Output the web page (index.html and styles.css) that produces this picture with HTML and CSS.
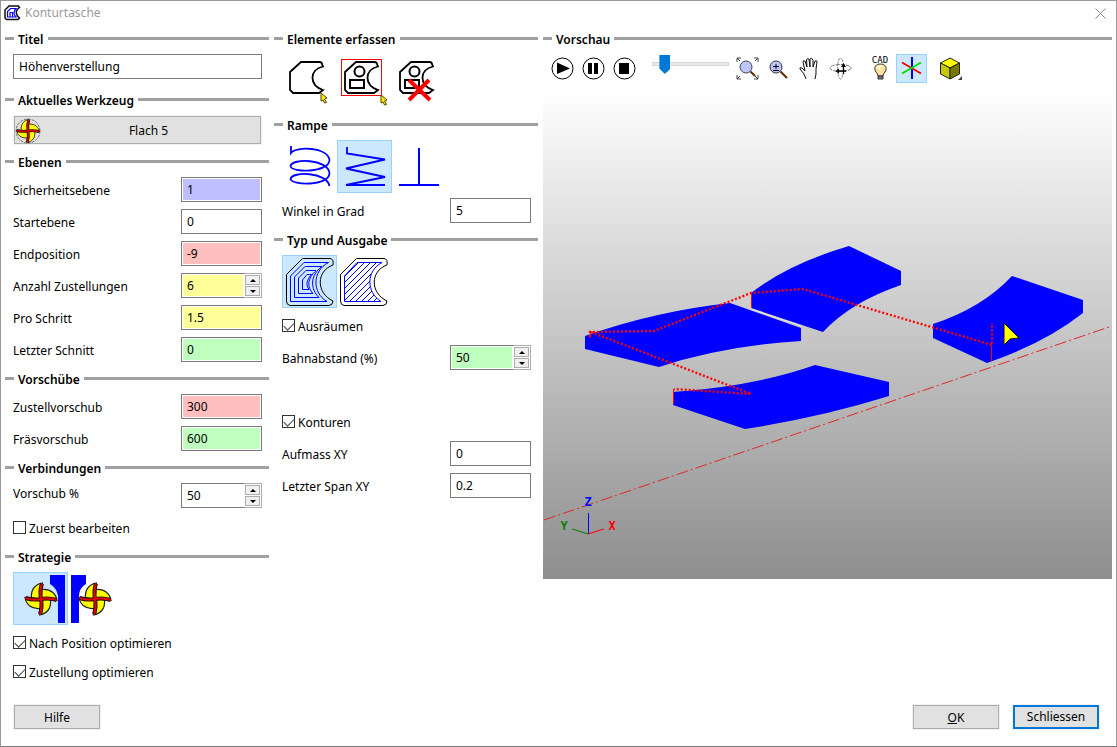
FILE: index.html
```html
<!DOCTYPE html>
<html lang="de">
<head>
<meta charset="utf-8">
<title>Konturtasche</title>
<link rel="stylesheet" href="styles.css">
</head>
<body>
<svg class="defs" aria-hidden="true">
  <defs>
    <path id="pocket" d="M19 8H37Q40 8 40 10L41 12.500C27 16 27 31 41 36L37 39H11L8 36V18Z"/>
    <path id="blade" d="M1.500 -16C-5 -15 -10.500 -10 -9.500 -1L0 0Z" fill="#ffff00" stroke="#222" stroke-width="1.200"/>
    <path id="arm" d="M1 -15.500Q-1.500 -8 0 0"/>
    <g id="arms"><use href="#arm"/><use href="#arm" transform="rotate(90)"/><use href="#arm" transform="rotate(180)"/><use href="#arm" transform="rotate(270)"/></g>
    <g id="cutter">
      <use href="#blade"/><use href="#blade" transform="rotate(90)"/><use href="#blade" transform="rotate(180)"/><use href="#blade" transform="rotate(270)"/>
      <use href="#arms" fill="none" stroke="#111" stroke-width="4"/>
      <use href="#arms" fill="none" stroke="#e00000" stroke-width="2.200"/>
    </g>
    <path id="pointer" d="M0 0L6 5L3.500 6L5.500 9.500L3.500 10L2 7L0 8Z" fill="#ffe800" stroke="#554400" stroke-width="1"/>
    <clipPath id="hatch-area"><path d="M20 7H45C29 16 29 37 44 46.500H7.500V21Z"/></clipPath>
  </defs>
</svg>

<div class="dialog">
  <header class="titlebar">
    <svg width="17" height="16" viewBox="0 0 17 16" fill="none"><path d="M5 1H14.500L15.500 2.500Q9 7 15.500 13L14 14.500H2.500L1 13V5Z" stroke="#111" stroke-width="1.500"/><path d="M6.500 3.500H12Q8 8 12 12H3.500V6.500ZM6 12V7.500H8.500V12" stroke="#0000ff" stroke-width="1.200"/></svg>
    <h1>Konturtasche</h1>
    <button class="close" aria-label="Schliessen"><svg width="11" height="11" viewBox="0 0 11 11"><path d="M.5 .5L10.500 10.500M10.500 .5L.5 10.500" stroke="#888"/></svg></button>
  </header>

  <main class="columns">
    <div class="column">
      <section class="group title-group">
        <h2><span>Titel</span></h2>
        <div class="body"><input class="field" type="text" value="Höhenverstellung" aria-label="Titel"></div>
      </section>
      <section class="group">
        <h2><span>Aktuelles Werkzeug</span></h2>
        <div class="body">
          <button class="btn tool"><svg width="26" height="26" viewBox="-18 -18 36 36"><circle r="16.500" fill="none" stroke="#444" stroke-dasharray="4 1.500"/><use href="#cutter"/></svg><span>Flach 5</span></button>
        </div>
      </section>
      <section class="group">
        <h2><span>Ebenen</span></h2>
        <div class="body">
          <div class="row"><label for="safe">Sicherheitsebene</label><input id="safe" class="field blue" value="1"></div>
          <div class="row"><label for="start">Startebene</label><input id="start" class="field" value="0"></div>
          <div class="row"><label for="end">Endposition</label><input id="end" class="field red" value="-9"></div>
          <div class="row"><label for="count">Anzahl Zustellungen</label><span class="spin"><input id="count" class="field yellow" value="6"><span class="arrows"><button aria-label="Mehr" class="up"></button><button aria-label="Weniger" class="down"></button></span></span></div>
          <div class="row"><label for="step">Pro Schritt</label><input id="step" class="field yellow" value="1.5"></div>
          <div class="row"><label for="last">Letzter Schnitt</label><input id="last" class="field green" value="0"></div>
        </div>
      </section>
      <section class="group">
        <h2><span>Vorschübe</span></h2>
        <div class="body">
          <div class="row"><label for="plunge">Zustellvorschub</label><input id="plunge" class="field red" value="300"></div>
          <div class="row"><label for="feed">Fräsvorschub</label><input id="feed" class="field green" value="600"></div>
        </div>
      </section>
      <section class="group">
        <h2><span>Verbindungen</span></h2>
        <div class="body">
          <div class="row raised"><label for="link">Vorschub %</label><span class="spin"><input id="link" class="field" value="50"><span class="arrows"><button aria-label="Mehr" class="up"></button><button aria-label="Weniger" class="down"></button></span></span></div>
          <label class="check"><input type="checkbox"><span>Zuerst bearbeiten</span></label>
        </div>
      </section>
      <section class="group">
        <h2><span>Strategie</span></h2>
        <div class="body tight">
          <div class="tiles">
            <button class="tile on" aria-label="Gleichlauf"><svg width="55" height="53" viewBox="0 0 55 53"><path d="M37 3H52V51H45V24Q44 16 37 12Z" fill="#0000ff"/><use href="#cutter" x="28" y="27"/></svg></button>
            <button class="tile" aria-label="Gegenlauf"><svg width="55" height="53" viewBox="0 0 55 53"><path d="M3 3H18V12Q11 16 11 24V51H3Z" fill="#0000ff"/><use href="#cutter" x="27" y="27"/></svg></button>
          </div>
          <label class="check"><input type="checkbox" checked><span>Nach Position optimieren</span></label>
          <label class="check"><input type="checkbox" checked><span>Zustellung optimieren</span></label>
        </div>
      </section>
    </div>

    <div class="column">
      <section class="group pick-group">
        <h2><span>Elemente erfassen</span></h2>
        <div class="body">
          <div class="tiles">
            <button class="tile" aria-label="Kontur"><svg width="55" height="53" viewBox="0 0 55 53" fill="none"><use href="#pocket" stroke="#000" stroke-width="1.800"/><use href="#pointer" x="39" y="39"/></svg></button>
            <button class="tile" aria-label="Kontur mit Inseln"><svg width="55" height="53" viewBox="0 0 55 53" fill="none"><rect x="4.500" y="5.500" width="40" height="36" stroke="#ff0000"/><use href="#pocket" stroke="#000" stroke-width="1.800"/><circle cx="22.500" cy="17.500" r="5" stroke="#000" stroke-width="2"/><path d="M13 26H27V34H13Z" stroke="#000" stroke-width="2"/><use href="#pointer" x="44" y="41"/></svg></button>
            <button class="tile" aria-label="Elemente löschen"><svg width="55" height="53" viewBox="0 0 55 53" fill="none"><use href="#pocket" stroke="#000" stroke-width="1.800"/><circle cx="22.500" cy="17.500" r="5" stroke="#000" stroke-width="2"/><path d="M13 26H27V34H13Z" stroke="#000" stroke-width="2"/><path d="M17 26L38 46M37 26L17 46" stroke="#ff0000" stroke-width="4"/></svg></button>
          </div>
        </div>
      </section>
      <section class="group">
        <h2><span>Rampe</span></h2>
        <div class="body tight">
          <div class="tiles">
            <button class="tile" aria-label="Helix"><svg width="55" height="53" viewBox="0 0 55 53" fill="none" stroke="#0000ff" stroke-width="1.800"><path d="M9 6V13C14 6 46 7 47.500 20C47 33 9 33 8.500 26C10 18 46 19 47.500 33C47 47 9 45 8.500 39C10 31 45 32 47.500 46"/></svg></button>
            <button class="tile on" aria-label="Zickzack"><svg width="55" height="53" viewBox="0 0 55 53" fill="none" stroke="#0000ff" stroke-width="1.800"><path d="M10 7V13.500L48 19.500L9 28.500L48 37L9 45H48"/></svg></button>
            <button class="tile" aria-label="Senkrecht"><svg width="55" height="53" viewBox="0 0 55 53" fill="none" stroke="#0000ff" stroke-width="2"><path d="M27 8V45M7 45H47"/></svg></button>
          </div>
          <div class="row"><label for="angle">Winkel in Grad</label><input id="angle" class="field" value="5"></div>
        </div>
      </section>
      <section class="group">
        <h2><span>Typ und Ausgabe</span></h2>
        <div class="body tight">
          <div class="tiles">
            <button class="tile on" aria-label="Konturparallel"><svg width="55" height="53" viewBox="0 0 55 53" fill="none" stroke="#0000ff"><path d="M20.500 3.500H48Q52 4 51 10C34 16 34 38 51 46Q51 50 47 50.500H8Q4.500 50 4.500 46V19.500Z" stroke="#000"/><path d="M22 7.500H46.500C30 16 30 38 45 46.500H8.500V21Z"/><path d="M23 11.500H40C28 20 28 34 37 42.500H12.500V22Z"/><path d="M24 15.500H34C25 24 25 32 31 38.500H16.500V23Z"/><path d="M25 19.500H29.500C24 26 24 30 27 34.500H20.500V25Z"/></svg></button>
            <button class="tile" aria-label="Linear"><svg width="55" height="53" viewBox="0 0 55 53" fill="none" stroke="#0000ff"><path d="M19.500 3.500H47Q51 4 50 10C33 16 33 38 50 46Q50 50 46 50.500H7Q3.500 50 3.500 46V19.500Z" stroke="#000"/><path d="M20 7.500H45C29 16 29 37 44 46.500H7.500V21Z"/><path clip-path="url(#hatch-area)" d="M-22 51L23 6M-16 51L29 6M-10 51L35 6M-4 51L41 6M2 51L47 6M8 51L53 6M14 51L59 6M20 51L65 6M26 51L71 6M32 51L77 6M38 51L83 6"/></svg></button>
          </div>
          <label class="check"><input type="checkbox" checked><span>Ausräumen</span></label>
          <div class="row spaced"><label for="dist">Bahnabstand (%)</label><span class="spin"><input id="dist" class="field green" value="50"><span class="arrows"><button aria-label="Mehr" class="up"></button><button aria-label="Weniger" class="down"></button></span></span></div>
          <label class="check separate"><input type="checkbox" checked><span>Konturen</span></label>
          <div class="row spaced"><label for="allow">Aufmass XY</label><input id="allow" class="field" value="0"></div>
          <div class="row spaced"><label for="chip">Letzter Span XY</label><input id="chip" class="field" value="0.2"></div>
        </div>
      </section>
    </div>

    <section class="group preview">
      <h2><span>Vorschau</span></h2>
      <div class="toolbar">
        <div class="set">
          <button aria-label="Start"><svg width="23" height="23" viewBox="0 0 23 23"><circle cx="11.500" cy="11.500" r="10.500" fill="#fff" stroke="#000"/><path d="M6 5.500L19 11.500L6 17Z"/></svg></button>
          <button aria-label="Pause"><svg width="23" height="23" viewBox="0 0 23 23"><circle cx="11.500" cy="11.500" r="10.500" fill="#fff" stroke="#000"/><path d="M6 6H10V17H6ZM12 6H16V17H12Z"/></svg></button>
          <button aria-label="Stopp"><svg width="23" height="23" viewBox="0 0 23 23"><circle cx="11.500" cy="11.500" r="10.500" fill="#fff" stroke="#000"/><path d="M6 6H16V17H6Z"/></svg></button>
        </div>
        <input class="slider" type="range" min="0" max="100" value="10" aria-label="Geschwindigkeit">
        <div class="set">
          <button aria-label="Alles zeigen"><svg width="23" height="23" viewBox="0 0 23 23" fill="none"><path d="M1 5V1H5M18 1H22V5M22 18V22H18M5 22H1V18M1 1L4 4M22 1L19 4M22 22L19 19M1 22L4 19" stroke="#444"/><circle cx="10" cy="10" r="6" fill="#bdc5ff" stroke="#444"/><path d="M14.500 14.500L19 19" stroke="#5a2c00" stroke-width="2"/></svg></button>
          <button aria-label="Zoomen"><svg width="23" height="23" viewBox="0 0 23 23" fill="none"><circle cx="9" cy="10" r="6" fill="#bdc5ff" stroke="#333"/><path d="M13.500 14.500L20 21" stroke="#5a2c00" stroke-width="2"/><path d="M6 9.500H12M9 7V12M6 13.500H12" stroke="#000"/></svg></button>
          <button aria-label="Verschieben"><svg width="23" height="23" viewBox="0 0 23 23"><path d="M8 22L6 17L2 12Q1 10 4 11L7 14L5 5Q5 3 7 4L9 10L8.500 3Q9 1 11 2L12 10V2Q14 0 15 3V10L17 4Q19 3 19 5L18 12V17L17 22" fill="#f8f8f8" stroke="#111"/></svg></button>
          <button aria-label="Drehen"><svg width="23" height="23" viewBox="0 0 23 23" fill="none"><ellipse cx="11.500" cy="11.500" rx="3" ry="10.500" stroke="#888" stroke-dasharray="4 1"/><ellipse cx="11.500" cy="11" rx="10.500" ry="3.500" stroke="#777" stroke-dasharray="4 1"/><path d="M14.500 8V17M9 14H17" stroke="#000" stroke-width="1.300"/><path d="M12 10L14.500 6L17 10ZM10 11.500L6.500 14L10 16.500Z" fill="#000"/></svg></button>
        </div>
        <div class="set cad-set">
          <button aria-label="CAD-Anzeige"><svg width="29" height="29" viewBox="0 0 29 29"><text x="14" y="9" class="cad">CAD</text><path d="M12 22Q12 20 10 18C7 13 10 10 14.500 10S22 13 19 18Q17 20 17 22Z" fill="#ffe39a" stroke="#333"/><path d="M12 13Q14 10 16 12L13 16Z" fill="#fff"/><path d="M12 22H17V25H12Z" fill="#777" stroke="#333"/></svg></button>
          <button class="on" aria-label="Achsen"><svg width="23" height="23" viewBox="0 0 23 23" fill="none" stroke-width="2"><path d="M12 0V22" stroke="#0000ff"/><path d="M2 5.500L21 16.500" stroke="#ff0000"/><path d="M2 16.500L21 5.500" stroke="#00e000"/></svg></button>
        </div>
        <button aria-label="Ansicht"><svg width="23" height="25" viewBox="0 0 23 25" stroke="#222"><path d="M11 2L20.500 7L11 12L1.500 7Z" fill="#ffff00"/><path d="M1.500 7L11 12V23L1.500 18Z" fill="#c8c800"/><path d="M20.500 7L11 12V23L20.500 18Z" fill="#777700"/><path d="M23 20V24H19Z" fill="#444" stroke="none"/></svg></button>
      </div>
      <svg class="scene" viewBox="543 89 569 490" role="img" aria-label="Vorschau">
        <g fill="#0000ff">
          <path d="M585 336Q656 311 730 303L801 328V341Q723 346 659 367L585 349Z"/>
          <path d="M751 293Q788 264 849 246L901 271V285Q851 302 823 332L751 308Z"/>
          <path d="M673 392Q756 386 815 365L889 382V396Q822 417 745 429L673 405Z"/>
          <path d="M933 324Q982 308 1012 276L1083 300V313Q1045 343 987 363L933 338Z"/>
        </g>
        <path d="M751 309L801 326" stroke="#e8e8e8"/>
        <path d="M544 520L1112 326" fill="none" stroke="#e02828" stroke-dasharray="12 3 2 3"/>
        <g fill="none" stroke="#ff0000">
          <path d="M590 337V332L654 331L751 293L803 289L992 345V323M591 332L751 394L674 389" stroke-width="2.300" stroke-dasharray="2 2"/>
          <path d="M751.500 293V308M673.500 389V404M991.500 345V361M590.500 331V338"/>
        </g>
        <path d="M1004 323L1019 338L1010 339L1004 345Z" fill="#ffff00" stroke="#111"/>
        <g fill="none"><path d="M588.500 534V513" stroke="#0000ff"/><path d="M588 534L604 529" stroke="#ff0000"/><path d="M588 534L572 529" stroke="#008000"/></g>
        <g class="axis"><text x="588" y="506" fill="#0000ff">Z</text><text x="564" y="530" fill="#008000">Y</text><text x="612" y="530" fill="#ff0000">X</text></g>
      </svg>
    </section>
  </main>

  <footer class="footer">
    <button class="btn">Hilfe</button>
    <button class="btn ok"><u>O</u>K</button>
    <button class="btn primary">Schliessen</button>
  </footer>
</div>
</body>
</html>
```
FILE: styles.css
```css
* { box-sizing: border-box; }
body { margin: 0; background: #fff; color: #000; font: 12px/18px "Noto Sans", "Open Sans", sans-serif; }
button, input { font: inherit; color: inherit; }
button { padding: 0; border: 0; background: none; }
svg { display: block; }
.defs { position: absolute; width: 0; height: 0; }

.dialog { display: flex; flex-direction: column; min-height: 100vh; border: 1px solid #999; border-bottom-color: #777; }
.titlebar { display: flex; align-items: center; gap: 4px; height: 28px; padding: 0 10px 4px 3px; }
.titlebar h1 { flex: 1; margin: 0; font-size: 12px; font-weight: 400; color: #999; }

.columns { display: grid; grid-template-columns: 264px 264px minmax(0, 1fr); gap: 5px; align-items: start; padding: 0 4px; }
.group h2 { display: flex; align-items: center; gap: 4px; height: 19px; margin: 0; font-size: 12px; font-weight: 600; white-space: nowrap; }
.group h2 span, .row label, .check span { padding-top: 2px; }
.group h2::before, .group h2::after { content: ""; width: 9px; height: 3px; background: #a0a0a0; }
.group h2::after { flex: 1; }
.body { display: flex; flex-direction: column; gap: 7px; padding: 6px 7px 7px 8px; }
.body.tight { gap: 4px; }
.title-group .body { padding-bottom: 11px; }
.pick-group .body { padding-bottom: 8px; }
.body.tight .tiles { margin-bottom: 1px; }

.row { display: flex; align-items: center; justify-content: space-between; height: 25px; }
.row.raised label { align-self: flex-start; }
.tight .row.spaced { margin-top: 3px; }
.check.separate { margin-top: 35px; }
.field { width: 100%; height: 25px; padding: 0 5px; border: 1px solid #7a7a7a; border-radius: 0; background: #fff; outline: 0; box-shadow: inset 0 0 0 1px #fff; }
.row .field { width: 81px; }
.blue { background: #bfbfff; }
.red { background: #ffbfbf; }
.yellow { background: #ffff99; }
.green { background: #bfffbf; }

.spin { display: flex; width: 81px; height: 25px; }
.row .spin .field { flex: 1; width: 0; border-right: 0; }
.arrows { display: flex; flex-direction: column; gap: 1px; padding: 1px; border: 1px solid #adadad; border-left: 0; }
.arrows button { display: grid; place-items: center; flex: 1; width: 15px; border: 1px solid #adadad; background: #f0f0f0; }
.arrows button::before { content: ""; border: 3px solid transparent; }
.arrows .up::before { border-top: 0; border-bottom-color: #000; }
.arrows .down::before { border-bottom: 0; border-top-color: #000; }

.check { display: flex; align-items: center; gap: 3px; height: 25px; }
.check input { appearance: none; width: 13px; height: 13px; margin: 0; border: 1px solid #333; background: #fff; display: grid; place-items: center; }
.check input:checked::before { content: ""; width: 9px; height: 5px; border: solid #444; border-width: 0 0 1px 1px; transform: translateY(-1px) rotate(-45deg); }

.tiles { display: flex; }
.tile { width: 55px; height: 53px; }
.on { background: #cce8ff; box-shadow: inset 0 0 0 1px #99d1ff; }

.btn { width: 86px; height: 24px; margin: 1px; padding-top: 1px; border: 1px solid #adadad; outline: 1px solid #f0f0f0; background: #e1e1e1; }
.btn.tool { display: flex; align-items: center; width: auto; height: 28px; }
.btn.tool span { flex: 1; padding-right: 4px; }
.btn.primary { padding: 0; border: 2px solid #0078d7; }

.toolbar { display: flex; align-items: flex-start; padding: 6px 0 6px 4px; }
.toolbar button { display: grid; place-items: center; width: 31px; height: 29px; }
.set { display: flex; }
.cad-set { margin: 0 8px 0 9px; }
.slider { appearance: none; width: 77px; height: 20px; margin: 0 3px 0 12px; background: none; }
.slider::-webkit-slider-runnable-track { height: 4px; border: 1px solid #d6d6d6; background: #e7eaea; }
.slider::-webkit-slider-thumb { appearance: none; width: 11px; height: 19px; margin-top: -8px; background: #0078d7; clip-path: polygon(0 0, 100% 0, 100% 72%, 50% 100%, 0 72%); }
.cad { font: 9px "DejaVu Sans Mono", monospace; text-anchor: middle; }
.scene { width: 100%; background: linear-gradient(#fff, #8e8e8e); }
.axis { font: bold 12px "DejaVu Sans Mono", monospace; text-anchor: middle; }

.footer { display: flex; gap: 12px; margin-top: auto; padding: 12px 16px 16px 12px; }
.ok { margin-left: auto; }
```
